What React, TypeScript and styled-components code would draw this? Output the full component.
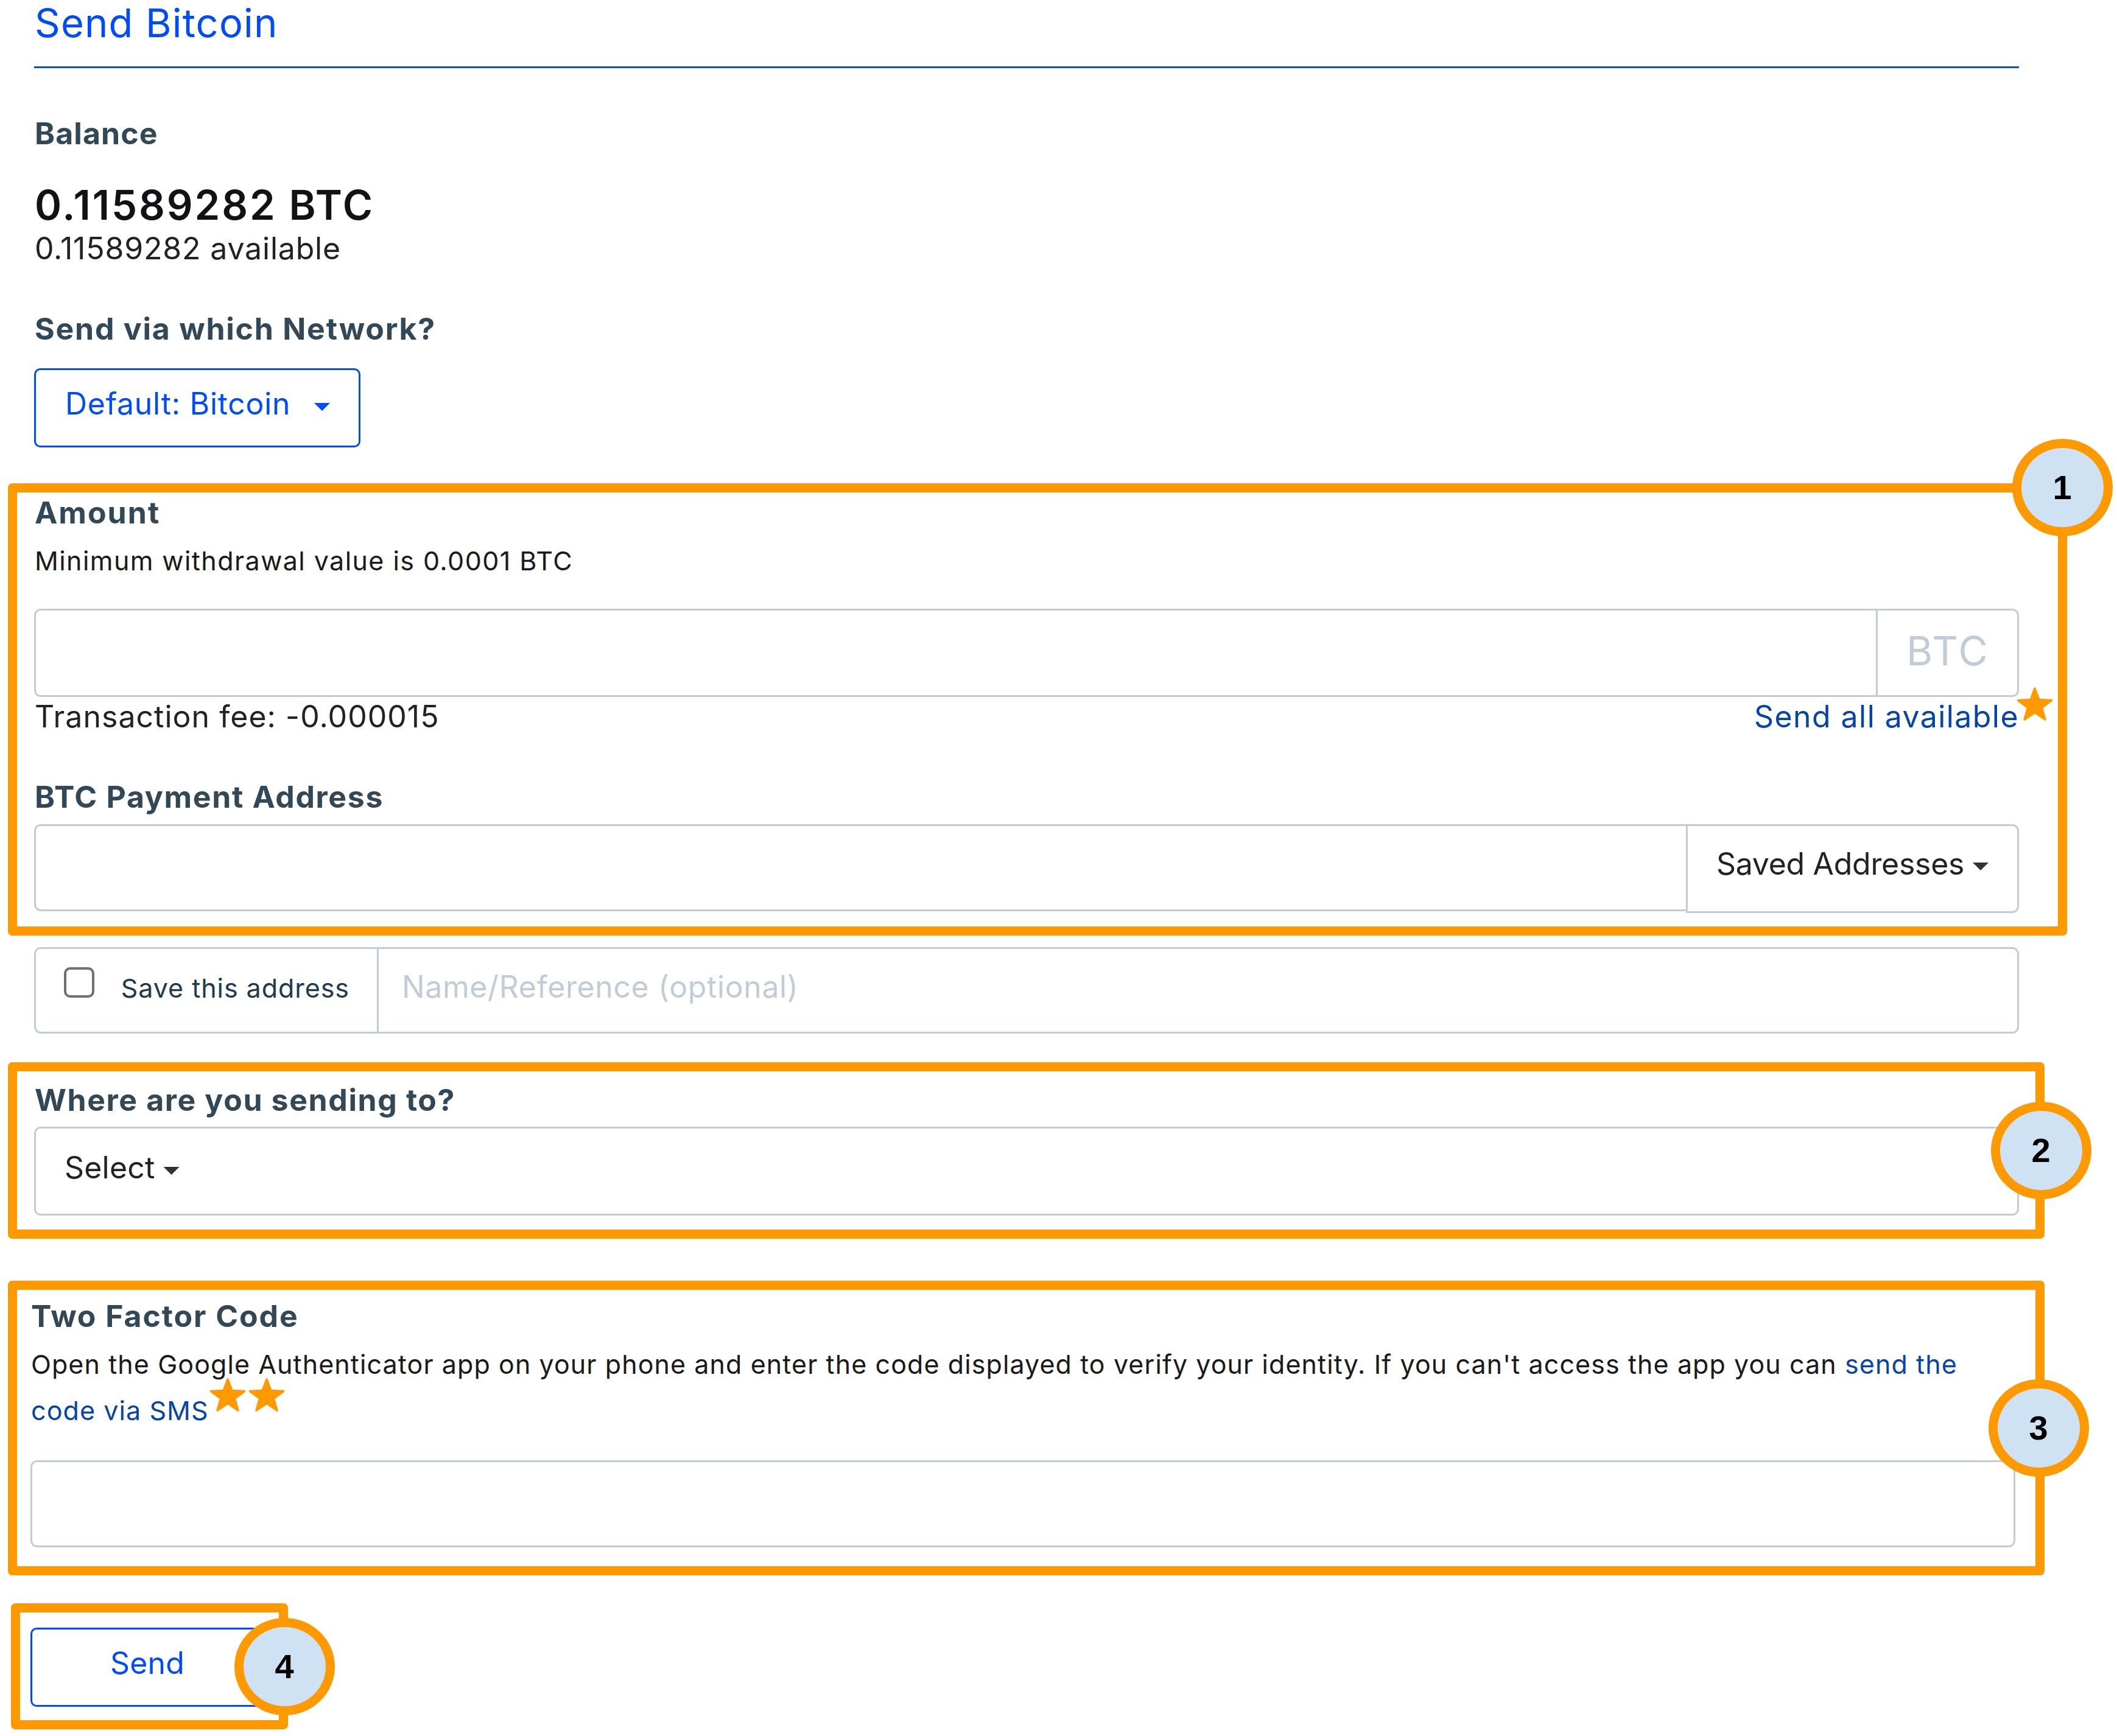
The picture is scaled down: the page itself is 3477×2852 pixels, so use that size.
import React from "react";
import styled, { createGlobalStyle } from "styled-components";

const color = {
  blue: "#024bf8",
  link: "#0644a6",
  heading: "#334856",
  ink: "#222222",
  strong: "#111215",
  line: "#c1ccd6",
  muted: "#c1ccd6",
  navy: "#1f3a4f",
  mark: "#ff9900",
  badge: "#cfe2f3",
};

const Global = createGlobalStyle`
  html, body { margin: 0; padding: 0; background: #fff; }
  *, *::before, *::after { box-sizing: border-box; }
  body { font-family: Inter, "Liberation Sans", sans-serif; font-weight: 400; }
`;

const Page = styled.main`
  width: 3477px;
  height: 2852px;
  overflow: hidden;
  display: flex;
  flex-direction: column;
  align-items: flex-start;
  background: #fff;
  color: ${color.ink};
`;

const Title = styled.h1`
  margin: 0 0 0 56px;
  padding-left: 1px;
  width: 3260px;
  height: 112px;
  border-bottom: 3px solid ${color.blue};
  color: ${color.blue};
  font-size: 65px;
  font-weight: 400;
  line-height: 75px;
  letter-spacing: 1.2px;
`;

const Intro = styled.section`
  display: flex;
  flex-direction: column;
  align-items: flex-start;
  padding: 77px 0 0 56px;
`;

const Label = styled.h2<{ $track: number; $top?: number }>`
  margin: ${(p) => p.$top ?? 0}px 0 0 1px;
  font-size: 50px;
  font-weight: 700;
  line-height: 60px;
  letter-spacing: ${(p) => p.$track}px;
  color: ${color.heading};
  white-space: nowrap;
`;

const BalanceAmount = styled.strong`
  margin: 49px 0 0 1px;
  font-size: 67px;
  font-weight: 600;
  line-height: 78px;
  letter-spacing: 2.9px;
  color: ${color.strong};
`;

const Body = styled.span<{ $track: number }>`
  font-size: 50px;
  font-weight: 400;
  line-height: 60px;
  letter-spacing: ${(p) => p.$track}px;
  white-space: nowrap;
`;

const Available = styled(Body)`
  margin: 2px 0 0 1px;
`;

const OutlineButton = styled.button<{ $width: number; $center?: boolean }>`
  display: flex;
  align-items: flex-start;
  justify-content: ${(p) => (p.$center ? "center" : "space-between")};
  width: ${(p) => p.$width}px;
  height: 130px;
  padding: 25px 47px 0 48px;
  border: 3px solid ${color.blue};
  border-radius: 10px;
  background: #fff;
  color: ${color.blue};
  font-family: inherit;
`;

const NetworkButton = styled(OutlineButton)`
  margin-top: 35px;
`;

const Caret = styled.i`
  flex: none;
  width: 26px;
  height: 13px;
  margin-top: 29px;
  background: currentColor;
  clip-path: polygon(0 0, 100% 0, 50% 100%);
`;

const Callout = styled.section<{ $top: number; $left: number; $width: number; $height: number; $pad: string }>`
  position: relative;
  display: flex;
  flex-direction: column;
  margin: ${(p) => p.$top}px 0 0 ${(p) => p.$left}px;
  width: ${(p) => p.$width}px;
  height: ${(p) => p.$height}px;
  padding: ${(p) => p.$pad};
  border: 15px solid ${color.mark};
  border-radius: 7px;
`;

const Badge = styled.span<{ $x: number; $y: number }>`
  position: absolute;
  left: ${(p) => p.$x}px;
  top: ${(p) => p.$y}px;
  display: flex;
  align-items: center;
  justify-content: center;
  width: 165px;
  height: 160px;
  border: 15px solid ${color.mark};
  border-radius: 50%;
  background: ${color.badge};
  color: #000;
  font: 700 56px/64px "Liberation Sans", Arial, sans-serif;
`;

const Hint = styled.p`
  margin: 23px 0 1px 1px;
  font-size: 43px;
  line-height: 52px;
  letter-spacing: 1.43px;
  color: #1a1a1a;
`;

const InputGroup = styled.div<{ $top: number; $height: number }>`
  display: flex;
  align-items: flex-start;
  margin-top: ${(p) => p.$top}px;
  width: 3260px;
  height: ${(p) => p.$height}px;
`;

const Field = styled.div<{ $height: number; $side?: "left" | "right" }>`
  flex: 1;
  display: flex;
  align-items: flex-start;
  height: ${(p) => p.$height}px;
  border: 3px solid ${color.line};
  border-radius: ${(p) =>
    p.$side === "left" ? "11px 0 0 11px" : p.$side === "right" ? "0 11px 11px 0" : "11px"};
`;

const Addon = styled.div<{ $width: number; $pad: string; $side: "left" | "right" }>`
  display: flex;
  align-items: flex-start;
  justify-content: space-between;
  width: ${(p) => p.$width}px;
  height: 100%;
  padding: ${(p) => p.$pad};
  border: 3px solid ${color.line};
  border-${(p) => (p.$side === "right" ? "left" : "right")}-width: ${(p) => (p.$side === "right" ? 3 : 0)}px;
  margin-left: ${(p) => (p.$side === "right" ? -3 : 0)}px;
  border-radius: ${(p) => (p.$side === "left" ? "11px 0 0 11px" : "0 11px 11px 0")};
  background: #fff;
`;

const Currency = styled.span`
  font-size: 66px;
  line-height: 78px;
  letter-spacing: 2.7px;
  color: ${color.muted};
`;

const FeeRow = styled.div`
  display: flex;
  justify-content: space-between;
  width: 3260px;
  padding-left: 1px;
  margin-top: 2px;
`;

const Link = styled.a`
  color: ${color.link};
`;

const SendAll = styled(Body)`
  position: relative;
  color: ${color.link};
`;

const StarMark = styled.svg<{ $x: number; $y: number }>`
  position: absolute;
  left: ${(p) => p.$x}px;
  top: ${(p) => p.$y}px;
  width: 60px;
  height: 56px;
  overflow: visible;
`;

const Star = ({ x, y }: { x: number; y: number }) => (
  <StarMark $x={x} $y={y} viewBox="0 0 60 56">
    <path
      d="M30 2 L37 20.5 L57.5 21.5 L41.5 33.5 L47 53 L30 41.5 L13 53 L18.5 33.5 L2.5 21.5 L23 20.5 Z"
      fill={color.mark}
      stroke={color.mark}
      strokeWidth="3.5"
      strokeLinejoin="round"
    />
  </StarMark>
);

const SaveRow = styled.div`
  margin-left: 56px;
`;

const Checkbox = styled.span`
  width: 50px;
  height: 50px;
  margin-top: 30px;
  border: 4px solid #707070;
  border-radius: 10px;
`;

const SaveText = styled.span`
  margin-top: 38px;
  font-size: 43px;
  line-height: 52px;
  letter-spacing: 0.95px;
  color: ${color.navy};
  white-space: nowrap;
`;

const Placeholder = styled(Body)`
  margin: 32px 0 0 38px;
  color: ${color.muted};
`;

const Selected = styled(Body)`
  margin: 34px 14px 0 47px;
`;

const SelectCaret = styled(Caret)`
  margin-top: 63px;
  color: #333;
`;

const DarkCaret = styled(Caret)`
  margin-top: 28px;
  color: #333;
`;

const CodeHelp = styled.p`
  position: relative;
  margin: 12px 0 0 1px;
  width: 3240px;
  height: 151px;
  font-size: 43px;
  line-height: 75.8px;
  letter-spacing: 1.08px;
  color: #1a1a1a;
`;

export default function App() {
  return (
    <Page>
      <Global />
      <Title>Send Bitcoin</Title>

      <Intro>
        <Label $track={1.1}>Balance</Label>
        <BalanceAmount>0.11589282 BTC</BalanceAmount>
        <Available $track={0.81}>0.11589282 available</Available>
        <Label $track={1.75} $top={72}>Send via which Network?</Label>
        <NetworkButton $width={536}>
          <Body $track={0.7}>Default: Bitcoin</Body>
          <Caret />
        </NetworkButton>
      </Intro>

      <Callout $top={59} $left={13} $width={3382} $height={743} $pad="3px 0 0 28px">
        <Label $track={2}>Amount</Label>
        <Hint>Minimum withdrawal value is 0.0001 BTC</Hint>
        <InputGroup $top={52} $height={145}>
          <Field $height={145} $side="left" />
          <Addon $width={235} $pad="27px 45px 0 47px" $side="right">
            <Currency>BTC</Currency>
          </Addon>
        </InputGroup>
        <FeeRow>
          <Body $track={1.02}>Transaction fee: -0.000015</Body>
          <SendAll as="a" $track={1.43}>
            Send all available
            <Star x={431} y={-18} />
          </SendAll>
        </FeeRow>
        <Label $track={1.65} $top={72}>BTC Payment Address</Label>
        <InputGroup $top={15} $height={146}>
          <Field $height={143} $side="left" />
          <Addon $width={547} $pad="32px 47px 0 47px" $side="right">
            <Body $track={-0.3}>Saved Addresses</Body>
            <DarkCaret />
          </Addon>
        </InputGroup>
        <Badge $x={3276.5} $y={-88}>1</Badge>
      </Callout>

      <SaveRow>
        <InputGroup $top={19} $height={142}>
          <Addon $width={563} $pad="0 45px 0 46px" $side="left">
            <Checkbox />
            <SaveText>Save this address</SaveText>
          </Addon>
          <Field $height={142} $side="right">
            <Placeholder $track={0.6}>Name/Reference (optional)</Placeholder>
          </Field>
        </InputGroup>
      </SaveRow>

      <Callout $top={47} $left={13} $width={3345} $height={290} $pad="17px 0 0 28px">
        <Label $track={1.6}>Where are you sending to?</Label>
        <InputGroup $top={14} $height={146}>
          <Field $height={146}>
            <Selected $track={0.19}>Select</Selected>
            <SelectCaret />
          </Field>
        </InputGroup>
        <Badge $x={3241.5} $y={50}>2</Badge>
      </Callout>

      <Callout $top={69} $left={13} $width={3345} $height={484} $pad="13px 0 0 22px">
        <Label $track={1.9}>Two Factor Code</Label>
        <CodeHelp>
          Open the Google Authenticator app on your phone and enter the code displayed to verify your identity. If you
          can't access the app you can <Link>send the code via SMS</Link>
          <Star x={293} y={60} />
          <Star x={357} y={60} />
        </CodeHelp>
        <InputGroup $top={44} $height={143}>
          <Field $height={143} />
        </InputGroup>
        <Badge $x={3237.5} $y={147}>3</Badge>
      </Callout>

      <Callout $top={46} $left={18} $width={455} $height={207} $pad="25px 0 0 17px">
        <OutlineButton $width={383} $center>
          <Body $track={0.2}>Send</Body>
        </OutlineButton>
        <Badge $x={351.5} $y={9}>4</Badge>
      </Callout>
    </Page>
  );
}
